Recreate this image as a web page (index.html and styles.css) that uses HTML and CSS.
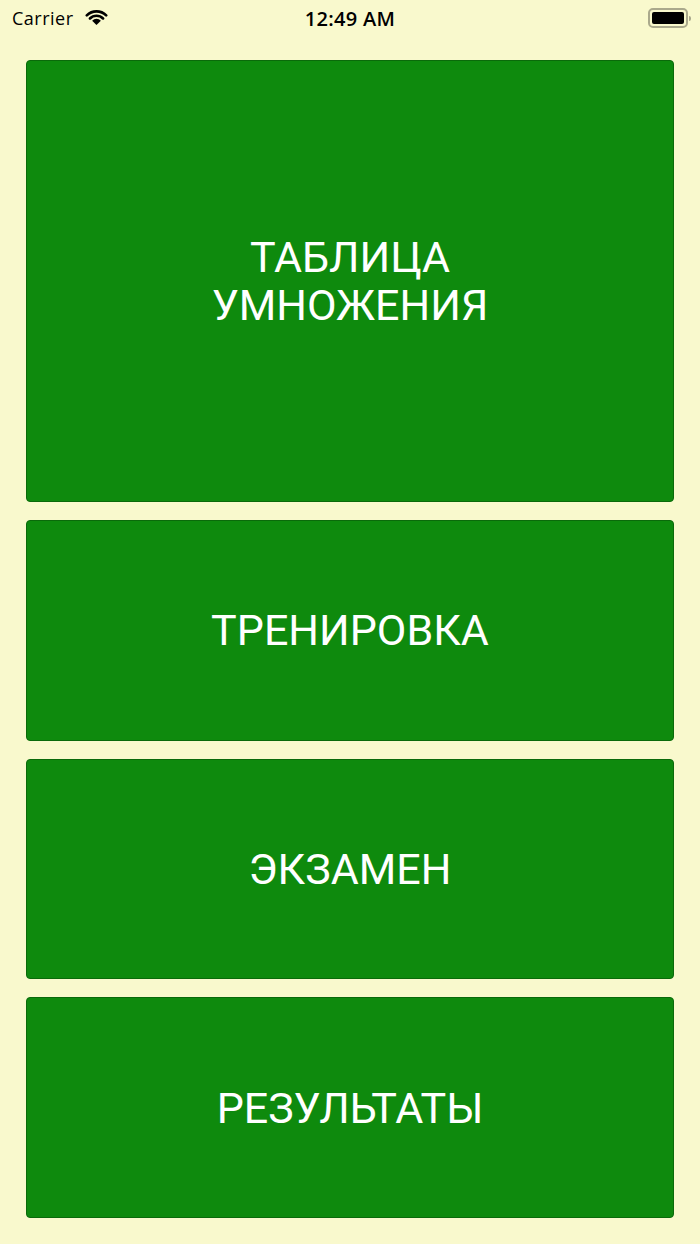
FILE: index.html
```html
<!DOCTYPE html>
<html lang="ru">
<head>
<meta charset="utf-8">
<title>Таблица умножения</title>
<link rel="stylesheet" href="styles.css">
</head>
<body>
<div class="screen">
  <div class="status">
    <div class="status-left">
      <span class="carrier">Carrier</span>
      <svg class="wifi" width="23" height="17" viewBox="0 0 26 19">
        <path d="M13 18 L8.05 13.05 A7 7 0 0 1 17.95 13.05 Z" fill="#000"/>
        <path d="M5.58 10.58 A10.5 10.5 0 0 1 20.42 10.58" fill="none" stroke="#000" stroke-width="3" stroke-linecap="round"/>
        <path d="M2.04 7.04 A15.5 15.5 0 0 1 23.96 7.04" fill="none" stroke="#000" stroke-width="3" stroke-linecap="round"/>
      </svg>
    </div>
    <div class="time">12:49 AM</div>
    <div class="status-right">
      <div class="battery"><div class="battery-fill"></div></div>
      <div class="battery-tip"></div>
    </div>
  </div>
  <main class="menu">
    <button class="tile tile-big">ТАБЛИЦА<br>УМНОЖЕНИЯ</button>
    <button class="tile">ТРЕНИРОВКА</button>
    <button class="tile">ЭКЗАМЕН</button>
    <button class="tile">РЕЗУЛЬТАТЫ</button>
  </main>
</div>
</body>
</html>
```
FILE: styles.css
```css
html, body {
  margin: 0;
  padding: 0;
}
body {
  background: #f9f9cd;
  font-family: "Roboto", "Liberation Sans", sans-serif;
}
.screen {
  width: 700px;
  height: 1244px;
  display: flex;
  flex-direction: column;
}
.status {
  height: 36px;
  display: flex;
  align-items: center;
  justify-content: space-between;
  padding: 0 9px 0 12px;
  position: relative;
  flex: none;
}
.status-left {
  display: flex;
  align-items: center;
  gap: 11px;
}
.carrier {
  font-family: "Open Sans", "Liberation Sans", sans-serif;
  font-size: 18px;
  color: #000;
  letter-spacing: 0.5px;
}
.wifi {
  display: block;
  margin-top: -1px;
}
.time {
  position: absolute;
  left: 0;
  right: 0;
  text-align: center;
  font-family: "Open Sans", "Liberation Sans", sans-serif;
  font-size: 20px;
  font-weight: 600;
  letter-spacing: 0.3px;
  color: #000;
  pointer-events: none;
}
.status-right {
  display: flex;
  align-items: center;
  gap: 1px;
}
.battery {
  width: 32px;
  height: 12px;
  border: 2px solid #aaa98c;
  border-radius: 5px;
  padding: 2px;
  box-sizing: content-box;
  display: flex;
  margin-top: -1px;
}
.battery-fill {
  flex: 1;
  background: #000;
  border-radius: 2px;
}
.battery-tip {
  width: 2px;
  height: 5px;
  background: #aaa98c;
  border-radius: 0 2px 2px 0;
}
.menu {
  flex: 1;
  display: flex;
  flex-direction: column;
  gap: 18px;
  padding: 24px 26px 26px;
}
.tile {
  flex: 1 1 0;
  display: flex;
  align-items: center;
  justify-content: center;
  background: #0e8a0d;
  border: 1px solid #0a6a0a;
  border-radius: 4px;
  color: #fff;
  font-family: "Roboto", "Liberation Sans", sans-serif;
  font-size: 43px;
  line-height: 48px;
  text-align: center;
  padding: 0;
  margin: 0;
}
.tile-big {
  flex: 0 0 442px;
}
```
